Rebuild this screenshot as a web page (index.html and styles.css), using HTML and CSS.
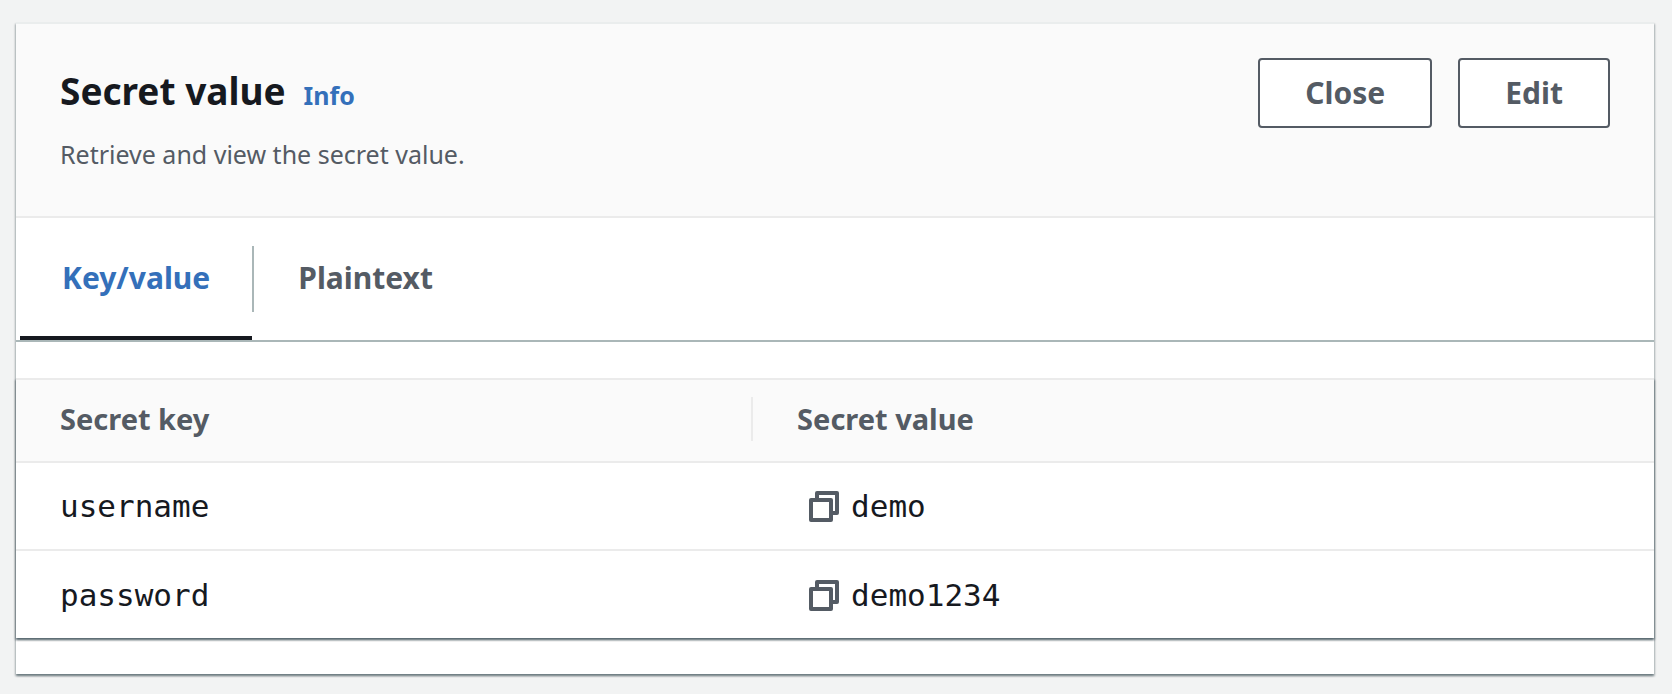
FILE: index.html
```html
<!DOCTYPE html>
<html lang="en">
<head>
<meta charset="utf-8">
<title>Secret value</title>
<link rel="stylesheet" href="styles.css">
</head>
<body>
<main class="card">
  <header class="card-header">
    <div class="heading">
      <div class="title-row">
        <h2 class="title">Secret value</h2>
        <a class="info" href="#">Info</a>
      </div>
      <p class="description">Retrieve and view the secret value.</p>
    </div>
    <div class="actions">
      <button class="button" type="button">Close</button>
      <button class="button" type="button">Edit</button>
    </div>
  </header>
  <div class="tabs" role="tablist">
    <button class="tab tab-active" type="button" role="tab" aria-selected="true"><span class="tab-label">Key/value</span></button>
    <button class="tab" type="button" role="tab" aria-selected="false"><span class="tab-label">Plaintext</span></button>
  </div>
  <div class="table-card">
    <table class="table">
      <thead>
        <tr><th class="key-column" scope="col"><div class="head-label">Secret key</div></th><th scope="col"><div class="head-label">Secret value</div></th></tr>
      </thead>
      <tbody>
        <tr>
          <td>username</td>
          <td><div class="value"><button class="copy" type="button" aria-label="Copy username"><svg class="icon" viewBox="0 0 32 32"><path d="M9 10V3h20v20h-6M3 10h20v20H3z"/></svg></button><span>demo</span></div></td>
        </tr>
        <tr>
          <td>password</td>
          <td><div class="value"><button class="copy" type="button" aria-label="Copy password"><svg class="icon" viewBox="0 0 32 32"><path d="M9 10V3h20v20h-6M3 10h20v20H3z"/></svg></button><span>demo1234</span></div></td>
        </tr>
      </tbody>
    </table>
  </div>
</main>
</body>
</html>
```
FILE: styles.css
```css
* { box-sizing: border-box; }

body {
  margin: 0;
  padding: 22px 18px 20px 16px;
  background: #f2f3f3;
  color: #16191f;
  font-family: "Noto Sans", "Open Sans", sans-serif;
}

.card {
  padding-bottom: 36px;
  background: #fff;
  border-top: 2px solid #eaeded;
  box-shadow: 0 2px 2px 0 rgba(0, 28, 36, 0.3), 1px 2px 2px 0 rgba(0, 28, 36, 0.2), -1px 2px 2px 0 rgba(0, 28, 36, 0.2);
}

.card-header {
  display: flex;
  justify-content: space-between;
  align-items: flex-start;
  padding: 34px 44px 42px;
  background: #fafafa;
  border-bottom: 2px solid #ebebeb;
}

.heading { padding-top: 8px; }

.title-row {
  display: flex;
  align-items: baseline;
  gap: 18px;
}

.title {
  margin: 0;
  font-size: 37px;
  line-height: 50px;
  font-weight: 700;
}

.info {
  color: #3470ba;
  font-size: 25px;
  line-height: 36px;
  font-weight: 700;
  text-decoration: none;
}

.description {
  margin: 18px 0 0;
  color: #545b64;
  font-size: 25px;
  line-height: 40px;
}

.actions {
  display: flex;
  gap: 26px;
}

.button {
  height: 70px;
  padding: 0 45px 2px;
  background: #fff;
  border: 2px solid #545b64;
  border-radius: 4px;
  color: #545b64;
  font: 700 30px "Noto Sans", "Open Sans", sans-serif;
}

.tabs {
  display: flex;
  gap: 4px;
  height: 124px;
  padding-left: 4px;
  border-bottom: 2px solid #aab7b8;
}

.tab {
  display: flex;
  padding: 28px 0 24px;
  background: none;
  border: 0;
  border-bottom: 4px solid transparent;
  color: #545b64;
  font: 700 30px "Noto Sans", "Open Sans", sans-serif;
}

.tab-label {
  padding: 0 42px;
  line-height: 64px;
}

.tab-active {
  position: relative;
  border-bottom-color: #16191f;
  color: #3470ba;
}

.tab-active::after {
  content: "";
  position: absolute;
  top: 28px;
  left: 100%;
  width: 2px;
  height: 66px;
  background: #aab7b8;
}

.table-card {
  margin-top: 36px;
  border-top: 2px solid #ebebeb;
  box-shadow: 0 2px 2px 0 rgba(0, 28, 36, 0.3), 1px 2px 2px 0 rgba(0, 28, 36, 0.3), -1px 2px 2px 0 rgba(0, 28, 36, 0.3);
}

.table {
  width: 100%;
  border-collapse: separate;
  border-spacing: 0;
  table-layout: fixed;
}

.key-column { width: 45%; }

th {
  padding: 17px 0 20px;
  background: #fafafa;
  border-bottom: 2px solid #ebebeb;
  color: #545b64;
  font-size: 29px;
  line-height: 44px;
  text-align: left;
}

.head-label { padding: 0 44px; }

.key-column .head-label { border-right: 2px solid #ebebeb; }

td {
  height: 88px;
  padding: 0 44px;
  border-bottom: 2px solid #ebebeb;
  font: 31px "DejaVu Sans Mono", monospace;
}

tr:last-child td {
  height: 87px;
  border-bottom: 0;
}

.value {
  display: flex;
  align-items: center;
  gap: 11px;
  padding-left: 11px;
}

.copy {
  display: flex;
  padding: 0;
  background: none;
  border: 0;
  color: #545b64;
}

.icon {
  width: 32px;
  height: 32px;
  fill: none;
  stroke: currentColor;
  stroke-width: 4;
  stroke-linejoin: round;
}
```
